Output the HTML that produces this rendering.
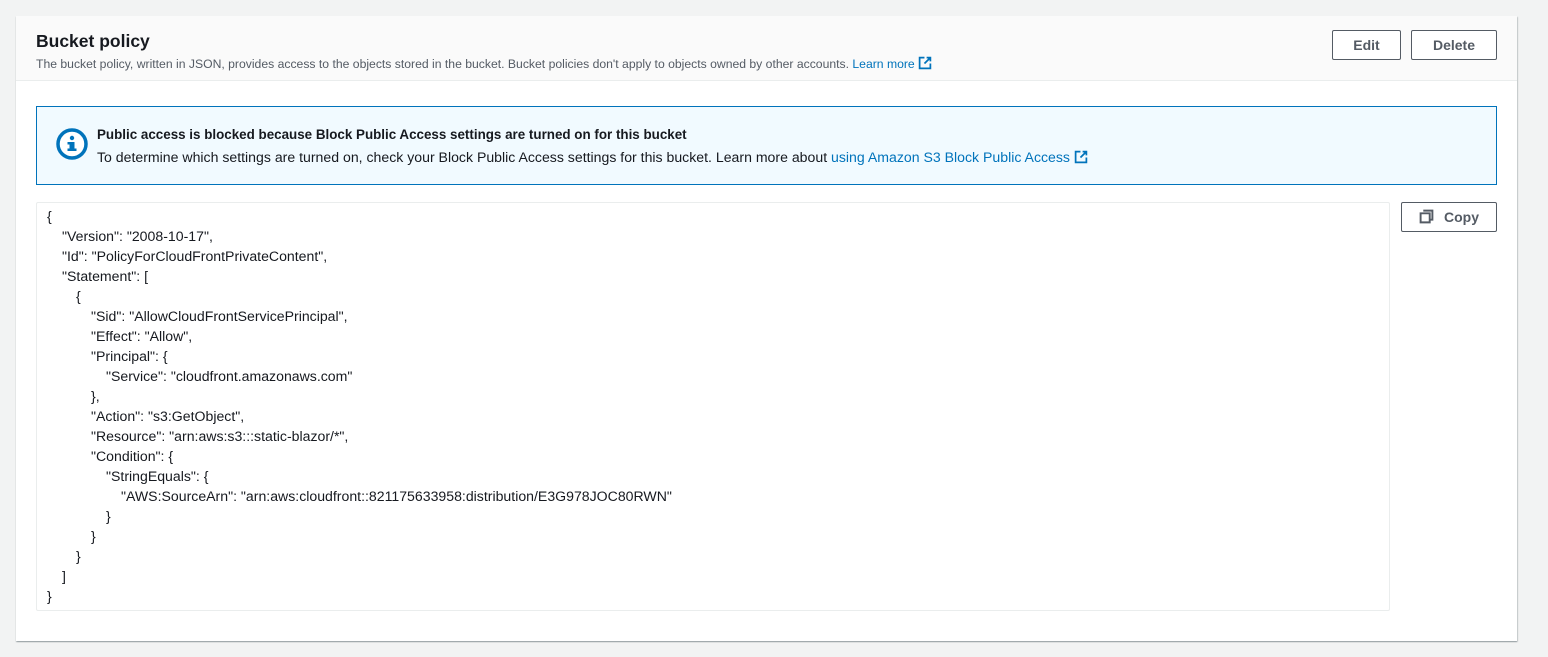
<!DOCTYPE html>
<html><head><style>
body{margin:0;width:1548px;height:657px;background:#f2f3f3;font-family:"Liberation Sans",sans-serif;position:relative;overflow:hidden}
.panel{position:absolute;left:16px;top:16px;width:1501px;height:625px;background:#fff;box-shadow:0 1px 1px rgba(0,28,36,.3),1px 1px 1px rgba(0,28,36,.15)}
.hdr{position:absolute;left:0;top:0;right:0;height:64px;background:#fafafa;border-bottom:1px solid #eaeded}
h2{position:absolute;left:20px;top:15px;margin:0;font-size:17.5px;font-weight:bold;color:#16191f}
.sub{position:absolute;left:20px;top:40px;font-size:12.2px;color:#545b64;white-space:nowrap}
a{color:#0073bb;text-decoration:none}
.btn{position:absolute;border:1px solid #545b64;border-radius:2px;background:#fff;color:#545b64;font-weight:bold;font-size:14px;text-align:center;box-sizing:border-box;line-height:28px}
.alert{position:absolute;left:20px;top:90px;width:1461px;height:79px;box-sizing:border-box;background:#f1faff;border:1px solid #0073bb}
.t1{position:absolute;left:60px;top:20px;font-size:13.4px;font-weight:bold;color:#16191f;white-space:nowrap}
.t2{position:absolute;left:60px;top:42px;font-size:14.1px;color:#16191f;white-space:nowrap}
.code{position:absolute;left:20px;top:186px;width:1354px;height:409px;box-sizing:border-box;border:1px solid #eaeded;border-radius:2px}
.code div{position:absolute;left:10px;font-size:14.1px;line-height:20px;color:#16191f;white-space:pre;margin-top:-1px}
</style></head><body>
<div class="panel">
<div class="hdr">
<h2>Bucket policy</h2>
<div class="sub">The bucket policy, written in JSON, provides access to the objects stored in the bucket. Bucket policies don't apply to objects owned by other accounts. <a>Learn more <svg width="14" height="14" viewBox="0 0 13 13" style="vertical-align:-2px"><path d="M6 1.5H1.5v10h10V7M8 1.5h3.5V5M11.5 1.5L6 7" fill="none" stroke="#0073bb" stroke-width="1.6"/></svg></a></div>
<div class="btn" style="left:1316px;top:14px;width:69px;height:30px">Edit</div>
<div class="btn" style="left:1395px;top:14px;width:86px;height:30px">Delete</div>
</div>
<div class="alert">
<svg style="position:absolute;left:18px;top:20px" width="34" height="34" viewBox="0 0 34 34"><circle cx="17" cy="17" r="14" fill="#fff" stroke="#0073bb" stroke-width="3.5"/><rect x="14.5" y="15" width="5" height="9" fill="#0073bb"/><rect x="12.5" y="15" width="4" height="2.5" fill="#0073bb"/><rect x="12.5" y="21.5" width="9" height="2.5" fill="#0073bb"/><circle cx="17" cy="11" r="2.2" fill="#0073bb"/></svg>
<div class="t1">Public access is blocked because Block Public Access settings are turned on for this bucket</div>
<div class="t2">To determine which settings are turned on, check your Block Public Access settings for this bucket. Learn more about <a>using Amazon S3 Block Public Access <svg width="14" height="14" viewBox="0 0 13 13" style="vertical-align:-2px"><path d="M6 1.5H1.5v10h10V7M8 1.5h3.5V5M11.5 1.5L6 7" fill="none" stroke="#0073bb" stroke-width="1.6"/></svg></a></div>
</div>
<div class="code">
<div style="top:4px;left:10px">{</div>
<div style="top:24px;left:25px">"Version": "2008-10-17",</div>
<div style="top:44px;left:25px">"Id": "PolicyForCloudFrontPrivateContent",</div>
<div style="top:64px;left:25px">"Statement": [</div>
<div style="top:84px;left:39px">{</div>
<div style="top:104px;left:54px">"Sid": "AllowCloudFrontServicePrincipal",</div>
<div style="top:124px;left:54px">"Effect": "Allow",</div>
<div style="top:144px;left:54px">"Principal": {</div>
<div style="top:164px;left:69px">"Service": "cloudfront.amazonaws.com"</div>
<div style="top:184px;left:54px">},</div>
<div style="top:204px;left:54px">"Action": "s3:GetObject",</div>
<div style="top:224px;left:54px">"Resource": "arn:aws:s3:::static-blazor/*",</div>
<div style="top:244px;left:54px">"Condition": {</div>
<div style="top:264px;left:69px">"StringEquals": {</div>
<div style="top:284px;left:84px">"AWS:SourceArn": "arn:aws:cloudfront::821175633958:distribution/E3G978JOC80RWN"</div>
<div style="top:304px;left:69px">}</div>
<div style="top:324px;left:54px">}</div>
<div style="top:344px;left:39px">}</div>
<div style="top:364px;left:25px">]</div>
<div style="top:384px;left:10px">}</div>
</div>
<div class="btn" style="left:1385px;top:186px;width:96px;height:30px"><svg width="15" height="15" viewBox="0 0 14 14" style="vertical-align:-2px;margin-right:10px"><path d="M4 1.5h8.5v8.5H10M1.5 4h8.5v8.5H1.5z" fill="none" stroke="#545b64" stroke-width="1.8"/></svg>Copy</div>
</div>
</body></html>
